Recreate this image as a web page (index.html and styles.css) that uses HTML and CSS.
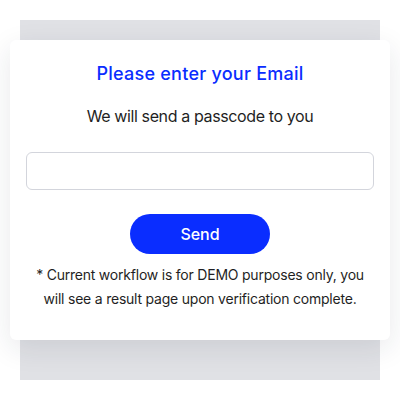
FILE: index.html
```html
<!DOCTYPE html>
<html lang="en">
<head>
    <meta charset="UTF-8">
    <meta name="viewport" content="width=device-width, initial-scale=1.0">
    <title>Email Verification</title>
    <link rel="stylesheet" href="styles.css">
</head>
<body>
    <div class="backdrop">
        <div class="card">
            <h1>Please enter your Email</h1>
            <p class="subtitle">We will send a passcode to you</p>
            <input type="email" class="email-input">
            <button class="send-btn">Send</button>
            <p class="note">* Current workflow is for DEMO purposes only, you will see a result page upon verification complete.</p>
        </div>
    </div>
</body>
</html>
```

FILE: styles.css
```css
body {
    margin: 0;
    padding: 20px;
    font-family: Inter, "Noto Sans", sans-serif;
    background: #ffffff;
}
.backdrop {
    width: 360px;
    height: 360px;
    background-color: #e0e1e5;
    padding-top: 20px;
    box-sizing: border-box;
}
.card {
    margin: 0 -10px;
    background: #ffffff;
    border-radius: 6px;
    box-shadow: 0 8px 28px rgba(30, 40, 60, 0.10);
    padding: 20px 16px 29px;
    display: flex;
    flex-direction: column;
    align-items: center;
}
h1 {
    margin: 0;
    font-size: 18px;
    line-height: 28px;
    font-weight: 500;
    letter-spacing: 0.25px;
    color: #0a2dff;
}
.subtitle {
    margin: 16px 0 0;
    font-size: 16px;
    line-height: 24px;
    letter-spacing: -0.38px;
    color: #1f1f24;
}
.email-input {
    margin-top: 24px;
    width: 100%;
    height: 38px;
    box-sizing: border-box;
    border: 1px solid #d3d5dc;
    border-radius: 6px;
    padding: 0 12px;
    font-family: inherit;
    font-size: 16px;
}
.send-btn {
    margin-top: 24px;
    width: 140px;
    height: 40px;
    border: none;
    border-radius: 20px;
    background-color: #0a2dff;
    color: #ffffff;
    font-family: inherit;
    font-size: 16px;
    font-weight: 500;
    cursor: pointer;
}
.note {
    margin: 9px 0 0;
    font-size: 14px;
    line-height: 24px;
    letter-spacing: -0.22px;
    text-align: center;
    color: #1f1f24;
}
```
